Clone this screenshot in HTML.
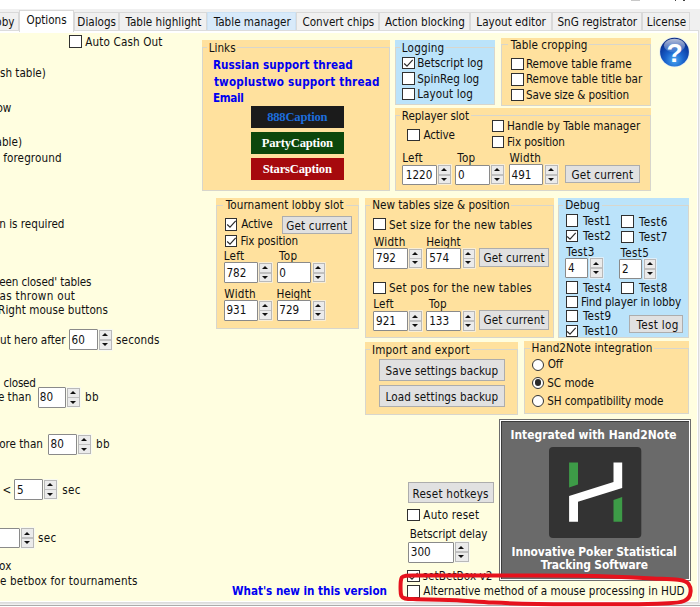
<!DOCTYPE html>
<html><head><meta charset="utf-8"><title>Options</title><style>
html,body{margin:0;padding:0}
body{width:700px;height:607px;overflow:hidden;position:relative;background:#fffee0;font-family:"DejaVu Sans Condensed","Liberation Sans",sans-serif;font-size:11.6px;color:#111}
div{box-sizing:border-box}
.abs{position:absolute}
#top{position:absolute;left:0;top:0;width:700px;height:31px;background:#f0f0f0;border-top:9.5px solid #fff}
#pan{position:absolute;left:-5px;top:29.6px;width:704.3px;height:573.4px;background:#fff;border:1px solid #dcdcdc}
#pan i{position:absolute;left:0;top:2.2px;right:1.2px;bottom:1.2px;background:#fffee0}
#rgt{position:absolute;left:699.3px;top:30px;width:2px;height:572.8px;background:#f0f0f0}
.tab{position:absolute;top:11.5px;height:18.5px;background:#f0f0f0;border:1px solid #d9d9d9;border-bottom:none;text-align:center;line-height:17px;white-space:nowrap;padding-top:1px;padding-left:1px}
.tab.hot{background:#d8eafa;border-color:#cbe1f4}
.tab.act{top:9.8px;height:22px;background:#fff;border-color:#d9d9d9;line-height:17px;padding-top:0.9px}
.t{position:absolute;white-space:pre;line-height:14px;height:14px}
.lnk{font-weight:bold;color:#0000f0}
.bw{font-weight:bold;color:#fff;font-size:11.9px}
.cb{position:absolute;background:#fff;border:1.2px solid #303030}
.cb svg{position:absolute;left:-1.2px;top:-1.2px}
.rd{position:absolute;width:12.2px;height:12.2px;border-radius:50%;background:#fff;border:1.1px solid #333}
.rd i{position:absolute;left:1.8px;top:1.8px;width:6.4px;height:6.4px;border-radius:50%;background:#2a2a2a}
.ed{position:absolute;background:#fff;border:1px solid #8a8a8a;border-radius:1px;padding-left:1.9px;white-space:pre;overflow:hidden}
.sp{position:absolute;background:#ebebeb;border:1px solid #b9b9b9;box-shadow:0 0 0 0.8px rgba(244,246,250,0.75)}
.sp b{position:absolute;left:0;right:0;top:50%;height:1.6px;background:#c0c0c0;margin-top:-0.8px}
.sp u,.sp s{position:absolute;left:50%;margin-left:-3.6px;width:0;height:0;border-left:3.6px solid transparent;border-right:3.6px solid transparent}
.sp u{top:13%;border-bottom:3.5px solid #111}
.sp s{bottom:16%;border-top:3.5px solid #111}
.bt{position:absolute;background:#e1e1e1;border:1px solid #adadad;text-align:center;white-space:pre}
.gb{position:absolute}
.fr{position:absolute;left:0;right:0;bottom:0;border:1px solid #d8d6cc}
.gl{z-index:1}
.cap{position:absolute;font-family:"Liberation Serif",serif;font-weight:bold;font-size:12.6px;letter-spacing:-0.2px;line-height:14px;height:14px;text-align:center;white-space:pre}
#ban{position:absolute;left:499.1px;top:418.9px;width:191.6px;height:161.8px;background:#fff;border:1px solid #6c6c6c;padding:1px}
#ban2{width:100%;height:100%;background:#6a6a6a;border-top:1px solid #3c3c3c;border-left:1px solid #3c3c3c}
#bot{position:absolute;left:0;top:602.8px;width:700px;height:5px;background:linear-gradient(#e3e3e3 0,#e3e3e3 1.2px,#f0f0f0 1.2px,#f0f0f0 2px,#ababab 2px,#ababab 3.2px,#fff 3.2px)}
</style></head><body>
<div id="top"></div>
<div id="bot"></div>
<div id="pan"><i></i></div><div id="rgt"></div>
<div class="abs" style="left:674.6px;top:0;width:1.8px;height:1.3px;background:#444"></div><div class="abs" style="left:683.2px;top:0;width:2.2px;height:1.3px;background:#444"></div><div class="abs" style="left:631px;top:0;width:9px;height:1.2px;background:#c8c8c8"></div>
<div class="tab" style="left:-20px;width:38.5px;text-align:right;padding-right:3px;box-sizing:border-box">bby</div>
<div class="tab act" style="left:18.5px;width:55.1px">Options</div>
<div class="tab" style="left:73.6px;width:45.2px">Dialogs</div>
<div class="tab" style="left:118.8px;width:88.4px">Table highlight</div>
<div class="tab hot" style="left:207.2px;width:89.2px">Table manager</div>
<div class="tab" style="left:296.4px;width:83.0px">Convert chips</div>
<div class="tab" style="left:379.4px;width:90.2px">Action blocking</div>
<div class="tab" style="left:469.6px;width:82.0px">Layout editor</div>
<div class="tab" style="left:551.6px;width:90.4px">SnG registrator</div>
<div class="tab" style="left:642.0px;width:48.0px">License</div>
<div class="cb" style="left:69.1px;top:35.4px;width:12.5px;height:12.3px"></div>
<div class="t " style="left:85.3px;top:35px;letter-spacing:0.13px;">Auto Cash Out</div>
<div class="t " style="right:654.2px;top:66.0px;">sh table)</div>
<div class="t " style="right:688.7px;top:101.0px;">ow</div>
<div class="t " style="right:678.0px;top:135.0px;">able)</div>
<div class="t " style="left:3.2px;top:151px;letter-spacing:0.11px;">foreground</div>
<div class="t " style="right:635.5px;top:217.0px;">on is required</div>
<div class="t " style="right:608.7px;top:275.0px;letter-spacing:-0.12px">een closed' tables</div>
<div class="t " style="right:624.8px;top:289.0px;letter-spacing:0.3px">was thrown out</div>
<div class="t " style="right:592.0px;top:303.0px;letter-spacing:0.05px">Right mouse buttons</div>
<div class="t " style="right:634.5px;top:333.0px;">ut hero after</div>
<div class="ed" style="left:69.2px;top:329.4px;width:28.5px;height:21.0px"></div>
<div class="t" style="left:71.6px;top:333px">60</div>
<div class="sp" style="left:99.2px;top:330.1px;width:13.0px;height:19.9px"><b></b><u></u><s></s></div>
<div class="t " style="left:116.0px;top:333px;letter-spacing:0.14px;">seconds</div>
<div class="t " style="left:3.6px;top:376px;letter-spacing:-0.24px;">closed</div>
<div class="t " style="right:668.7px;top:390.0px;">e than</div>
<div class="ed" style="left:37.5px;top:387.1px;width:28.4px;height:20.6px"></div>
<div class="t" style="left:39.8px;top:390px">80</div>
<div class="sp" style="left:67.4px;top:387.8px;width:13.0px;height:19.5px"><b></b><u></u><s></s></div>
<div class="t " style="left:85.1px;top:390px;letter-spacing:0.30px;">bb</div>
<div class="t " style="right:657.0px;top:437.0px;">ore than</div>
<div class="ed" style="left:48.3px;top:434.3px;width:28.3px;height:20.4px"></div>
<div class="t" style="left:50.6px;top:437px">80</div>
<div class="sp" style="left:78.1px;top:435.0px;width:13.0px;height:19.3px"><b></b><u></u><s></s></div>
<div class="t " style="left:96.1px;top:437px;letter-spacing:0.30px;">bb</div>
<div class="t " style="left:2.6px;top:483.0px;">&lt;</div>
<div class="ed" style="left:14.3px;top:479.2px;width:28.4px;height:20.6px"></div>
<div class="t" style="left:17.0px;top:483px">5</div>
<div class="sp" style="left:44.2px;top:479.9px;width:13.0px;height:19.5px"><b></b><u></u><s></s></div>
<div class="t " style="left:62.3px;top:483px;letter-spacing:0.30px;">sec</div>
<div class="ed" style="left:-10.0px;top:527.6px;width:29.8px;height:20.4px"></div>
<div class="sp" style="left:21.2px;top:528.3px;width:13.0px;height:19.3px"><b></b><u></u><s></s></div>
<div class="t " style="left:38.1px;top:531px;letter-spacing:0.30px;">sec</div>
<div class="t " style="right:688.7px;top:559.0px;">ox</div>
<div class="t " style="left:0.0px;top:574px;letter-spacing:0.17px;">e betbox for tournaments</div>
<div class="gb" style="left:201.9px;top:40.4px;width:188.4px;height:150.2px;background:#ffe19e"><div class="fr" style="top:7.1px"></div></div>
<div class="abs" style="left:206.8px;top:45.6px;width:30.4px;height:4px;background:#ffe19e"></div>
<div class="t " style="left:208.7px;top:41px;letter-spacing:0.02px;">Links</div>
<div class="t lnk" style="left:212.9px;top:58px;letter-spacing:0.08px;">Russian support thread</div>
<div class="t lnk" style="left:213.9px;top:75px;letter-spacing:0.21px;">twoplustwo support thread</div>
<div class="t lnk" style="left:212.9px;top:91px;letter-spacing:-0.30px;">Email</div>
<div class="abs" style="left:250.7px;top:106px;width:93.2px;height:22.2px;background:#1b1b1b"></div>
<div class="cap" style="left:250.7px;top:109.75px;width:93.2px;color:#1d6ddc">888Caption</div>
<div class="abs" style="left:250.7px;top:131.8px;width:93.2px;height:22.6px;background:#0c470c"></div>
<div class="cap" style="left:250.7px;top:135.75px;width:93.2px;color:#fff">PartyCaption</div>
<div class="abs" style="left:250.7px;top:157.6px;width:93.2px;height:22.6px;background:#a6090d"></div>
<div class="cap" style="left:250.7px;top:161.75px;width:93.2px;color:#fff">StarsCaption</div>
<div class="gb" style="left:395.0px;top:40.4px;width:100.4px;height:64.6px;background:#bbe3fa"><div class="fr" style="top:7.1px"></div></div>
<div class="abs" style="left:399.9px;top:45.6px;width:46.0px;height:4px;background:#bbe3fa"></div>
<div class="t " style="left:401.8px;top:41px;letter-spacing:0.18px;">Logging</div>
<div class="cb" style="left:402.3px;top:56.8px;width:12.5px;height:12.3px"><svg viewBox="0 0 12.5 12.3" width="12.5" height="12.3"><path d="M2.2 6.5 L5 9.1 L10.7 2.9" fill="none" stroke="#2a2a2a" stroke-width="1.15"/></svg></div>
<div class="t " style="left:417.2px;top:56px;letter-spacing:0.00px;">Betscript log</div>
<div class="cb" style="left:402.3px;top:72.4px;width:12.5px;height:12.3px"></div>
<div class="t " style="left:417.2px;top:72px;letter-spacing:0.03px;">SpinReg log</div>
<div class="cb" style="left:402.3px;top:87.6px;width:12.5px;height:12.3px"></div>
<div class="t " style="left:417.2px;top:87px;letter-spacing:0.10px;">Layout log</div>
<div class="gb" style="left:501.1px;top:37.7px;width:149.8px;height:68.3px;background:#ffe19e"><div class="fr" style="top:6.8px"></div></div>
<div class="abs" style="left:507.8px;top:42.6px;width:81.4px;height:4px;background:#ffe19e"></div>
<div class="t " style="left:510.7px;top:38px;letter-spacing:0.09px;">Table cropping</div>
<div class="cb" style="left:511.2px;top:57.8px;width:12.5px;height:12.3px"></div>
<div class="t " style="left:525.9px;top:57px;letter-spacing:-0.03px;">Remove table frame</div>
<div class="cb" style="left:511.2px;top:73.3px;width:12.5px;height:12.3px"></div>
<div class="t " style="left:525.9px;top:72px;letter-spacing:0.00px;">Remove table title bar</div>
<div class="cb" style="left:511.2px;top:88.6px;width:12.5px;height:12.3px"></div>
<div class="t " style="left:525.9px;top:88px;letter-spacing:-0.11px;">Save size &amp; position</div>
<svg class="abs" style="left:658px;top:36px" width="34" height="34" viewBox="0 0 34 34">
<defs><radialGradient id="hg" cx="50%" cy="78%" r="70%"><stop offset="0" stop-color="#4aa8f2"/><stop offset="0.45" stop-color="#1a63cc"/><stop offset="0.85" stop-color="#0b3aa0"/><stop offset="1" stop-color="#0a2d86"/></radialGradient>
<linearGradient id="hs" x1="0" y1="0" x2="0" y2="1"><stop offset="0" stop-color="#fff" stop-opacity="0.7"/><stop offset="1" stop-color="#fff" stop-opacity="0.1"/></linearGradient></defs>
<circle cx="16.5" cy="16.1" r="15.2" fill="#dfe9f3" opacity="0.8"/>
<circle cx="16.5" cy="16.1" r="14.4" fill="url(#hg)"/>
<ellipse cx="16.5" cy="9.6" rx="10.6" ry="6.8" fill="url(#hs)"/>
<text x="16.6" y="25.6" text-anchor="middle" font-family="'Liberation Sans',sans-serif" font-weight="bold" font-size="26.5" fill="#fff">?</text>
</svg>
<div class="gb" style="left:395.0px;top:108.0px;width:256.0px;height:83.0px;background:#ffe19e"><div class="fr" style="top:7.1px"></div></div>
<div class="abs" style="left:399.9px;top:113.2px;width:71.4px;height:4px;background:#ffe19e"></div>
<div class="t " style="left:401.8px;top:109px;letter-spacing:-0.07px;">Replayer slot</div>
<div class="cb" style="left:407.2px;top:129.1px;width:12.5px;height:12.3px"></div>
<div class="t " style="left:423.4px;top:128px;letter-spacing:-0.13px;">Active</div>
<div class="cb" style="left:491.9px;top:120.2px;width:12.5px;height:12.3px"></div>
<div class="t " style="left:507.0px;top:119px;letter-spacing:0.00px;">Handle by Table manager</div>
<div class="cb" style="left:491.9px;top:135.6px;width:12.5px;height:12.3px"></div>
<div class="t " style="left:507.0px;top:135px;letter-spacing:-0.08px;">Fix position</div>
<div class="t " style="left:402.2px;top:151px;letter-spacing:0.30px;">Left</div>
<div class="t " style="left:457.2px;top:151px;letter-spacing:0.30px;">Top</div>
<div class="t " style="left:509.5px;top:151px;letter-spacing:0.30px;">Width</div>
<div class="ed" style="left:402.4px;top:164.5px;width:34.4px;height:20.4px"></div>
<div class="t" style="left:405.8px;top:168px">1220</div>
<div class="sp" style="left:438.4px;top:165.2px;width:12.5px;height:19.3px"><b></b><u></u><s></s></div>
<div class="ed" style="left:455.2px;top:164.5px;width:34.4px;height:20.4px"></div>
<div class="t" style="left:458.1px;top:168px">0</div>
<div class="sp" style="left:491.2px;top:165.2px;width:12.6px;height:19.3px"><b></b><u></u><s></s></div>
<div class="ed" style="left:509.1px;top:164.4px;width:34.1px;height:20.5px"></div>
<div class="t" style="left:511.6px;top:168px">491</div>
<div class="sp" style="left:544.9px;top:165.1px;width:12.9px;height:19.4px"><b></b><u></u><s></s></div>
<div class="bt" style="left:564.9px;top:164.6px;width:74.7px;height:18.9px"></div>
<div class="t " style="left:571.6px;top:168px;letter-spacing:0.19px;">Get current</div>
<div class="gb" style="left:216.2px;top:197.9px;width:143.0px;height:131.6px;background:#ffe19e"><div class="fr" style="top:7.0px"></div></div>
<div class="abs" style="left:222.8px;top:203.0px;width:123.2px;height:4px;background:#ffe19e"></div>
<div class="t " style="left:225.7px;top:198px;letter-spacing:0.10px;">Tournament lobby slot</div>
<div class="cb" style="left:224.9px;top:218.4px;width:12.5px;height:12.3px"><svg viewBox="0 0 12.5 12.3" width="12.5" height="12.3"><path d="M2.2 6.5 L5 9.1 L10.7 2.9" fill="none" stroke="#2a2a2a" stroke-width="1.15"/></svg></div>
<div class="t " style="left:241.3px;top:217px;letter-spacing:-0.18px;">Active</div>
<div class="bt" style="left:282.3px;top:215.5px;width:70.0px;height:18.9px"></div>
<div class="t " style="left:286.3px;top:219px;letter-spacing:0.14px;">Get current</div>
<div class="cb" style="left:224.9px;top:234.8px;width:12.5px;height:12.3px"><svg viewBox="0 0 12.5 12.3" width="12.5" height="12.3"><path d="M2.2 6.5 L5 9.1 L10.7 2.9" fill="none" stroke="#2a2a2a" stroke-width="1.15"/></svg></div>
<div class="t " style="left:240.4px;top:234px;letter-spacing:-0.10px;">Fix position</div>
<div class="t " style="left:223.7px;top:249px;letter-spacing:0.30px;">Left</div>
<div class="t " style="left:279.0px;top:249px;letter-spacing:0.30px;">Top</div>
<div class="ed" style="left:223.9px;top:262.4px;width:33.9px;height:20.5px"></div>
<div class="t" style="left:226.4px;top:266px">782</div>
<div class="sp" style="left:259.4px;top:263.1px;width:12.8px;height:19.4px"><b></b><u></u><s></s></div>
<div class="ed" style="left:276.9px;top:262.4px;width:33.7px;height:20.5px"></div>
<div class="t" style="left:279.3px;top:266px">0</div>
<div class="sp" style="left:312.5px;top:263.1px;width:12.5px;height:19.4px"><b></b><u></u><s></s></div>
<div class="t " style="left:224.3px;top:287px;letter-spacing:0.28px;">Width</div>
<div class="t " style="left:276.6px;top:287px;letter-spacing:-0.05px;">Height</div>
<div class="ed" style="left:223.9px;top:299.8px;width:33.9px;height:20.8px"></div>
<div class="t" style="left:226.4px;top:303px">931</div>
<div class="sp" style="left:259.4px;top:300.5px;width:12.8px;height:19.7px"><b></b><u></u><s></s></div>
<div class="ed" style="left:276.9px;top:299.8px;width:33.7px;height:20.8px"></div>
<div class="t" style="left:279.3px;top:303px">729</div>
<div class="sp" style="left:312.5px;top:300.5px;width:12.5px;height:19.7px"><b></b><u></u><s></s></div>
<div class="gb" style="left:365.2px;top:197.6px;width:188.9px;height:140.5px;background:#ffe19e"><div class="fr" style="top:7.0px"></div></div>
<div class="abs" style="left:370.4px;top:202.7px;width:140.7px;height:4px;background:#ffe19e"></div>
<div class="t " style="left:372.2px;top:198px;letter-spacing:0.00px;">New tables size &amp; position</div>
<div class="cb" style="left:373.4px;top:218.2px;width:12.5px;height:12.3px"></div>
<div class="t " style="left:389.0px;top:218px;letter-spacing:0.17px;">Set size for the new tables</div>
<div class="t " style="left:373.9px;top:235px;letter-spacing:0.30px;">Width</div>
<div class="t " style="left:426.2px;top:235px;letter-spacing:0.00px;">Height</div>
<div class="ed" style="left:373.4px;top:248.0px;width:34.4px;height:20.5px"></div>
<div class="t" style="left:376.1px;top:251px">792</div>
<div class="sp" style="left:409.4px;top:248.7px;width:12.5px;height:19.4px"><b></b><u></u><s></s></div>
<div class="ed" style="left:426.2px;top:248.0px;width:34.4px;height:20.5px"></div>
<div class="t" style="left:429.2px;top:251px">574</div>
<div class="sp" style="left:462.5px;top:248.7px;width:12.5px;height:19.4px"><b></b><u></u><s></s></div>
<div class="bt" style="left:479.0px;top:248.2px;width:69.8px;height:19.3px"></div>
<div class="t " style="left:483.4px;top:251px;letter-spacing:0.17px;">Get current</div>
<div class="cb" style="left:373.4px;top:281.6px;width:12.5px;height:12.3px"></div>
<div class="t " style="left:389.0px;top:281px;letter-spacing:0.23px;">Set pos for the new tables</div>
<div class="t " style="left:373.2px;top:297px;letter-spacing:0.30px;">Left</div>
<div class="t " style="left:428.7px;top:297px;letter-spacing:0.30px;">Top</div>
<div class="ed" style="left:373.4px;top:310.7px;width:34.4px;height:20.4px"></div>
<div class="t" style="left:376.1px;top:314px">921</div>
<div class="sp" style="left:409.4px;top:311.4px;width:12.5px;height:19.3px"><b></b><u></u><s></s></div>
<div class="ed" style="left:426.2px;top:310.7px;width:34.4px;height:20.4px"></div>
<div class="t" style="left:429.2px;top:314px">133</div>
<div class="sp" style="left:462.5px;top:311.4px;width:12.5px;height:19.3px"><b></b><u></u><s></s></div>
<div class="bt" style="left:479.0px;top:310.3px;width:69.8px;height:19.4px"></div>
<div class="t " style="left:483.4px;top:313px;letter-spacing:0.17px;">Get current</div>
<div class="gb" style="left:558.3px;top:197.8px;width:131.0px;height:140.6px;background:#bbe3fa"><div class="fr" style="top:7.1px"></div></div>
<div class="abs" style="left:563.4px;top:203.0px;width:38.2px;height:4px;background:#bbe3fa"></div>
<div class="t " style="left:565.2px;top:198px;letter-spacing:0.07px;">Debug</div>
<div class="cb" style="left:565.5px;top:214.4px;width:12.5px;height:12.3px"></div>
<div class="t " style="left:582.9px;top:214px;letter-spacing:0.27px;">Test1</div>
<div class="cb" style="left:621.2px;top:215.4px;width:12.5px;height:12.3px"></div>
<div class="t " style="left:639.1px;top:215px;letter-spacing:0.30px;">Test6</div>
<div class="cb" style="left:565.5px;top:229.9px;width:12.5px;height:12.3px"><svg viewBox="0 0 12.5 12.3" width="12.5" height="12.3"><path d="M2.2 6.5 L5 9.1 L10.7 2.9" fill="none" stroke="#2a2a2a" stroke-width="1.15"/></svg></div>
<div class="t " style="left:582.9px;top:229px;letter-spacing:0.27px;">Test2</div>
<div class="cb" style="left:621.2px;top:230.8px;width:12.5px;height:12.3px"></div>
<div class="t " style="left:639.1px;top:230px;letter-spacing:0.30px;">Test7</div>
<div class="t " style="left:566.2px;top:245px;letter-spacing:0.30px;">Test3</div>
<div class="t " style="left:620.6px;top:246px;letter-spacing:0.30px;">Test5</div>
<div class="ed" style="left:565.2px;top:257.6px;width:23.3px;height:20.4px"></div>
<div class="t" style="left:567.9px;top:261px">4</div>
<div class="sp" style="left:590.1px;top:258.3px;width:12.6px;height:19.3px"><b></b><u></u><s></s></div>
<div class="ed" style="left:619.3px;top:258.5px;width:23.0px;height:20.8px"></div>
<div class="t" style="left:622.1px;top:262px">2</div>
<div class="sp" style="left:644.2px;top:259.2px;width:12.2px;height:19.7px"><b></b><u></u><s></s></div>
<div class="cb" style="left:565.5px;top:281.4px;width:12.5px;height:12.3px"></div>
<div class="t " style="left:582.9px;top:281px;letter-spacing:0.30px;">Test4</div>
<div class="cb" style="left:621.2px;top:281.8px;width:12.5px;height:12.3px"></div>
<div class="t " style="left:639.1px;top:281px;letter-spacing:0.30px;">Test8</div>
<div class="cb" style="left:565.5px;top:295.9px;width:12.5px;height:12.3px"></div>
<div class="t " style="left:581.0px;top:295px;letter-spacing:-0.11px;">Find player in lobby</div>
<div class="cb" style="left:565.5px;top:310.1px;width:12.5px;height:12.3px"></div>
<div class="t " style="left:582.9px;top:309px;letter-spacing:0.30px;">Test9</div>
<div class="cb" style="left:565.5px;top:324.8px;width:12.5px;height:12.3px"><svg viewBox="0 0 12.5 12.3" width="12.5" height="12.3"><path d="M2.2 6.5 L5 9.1 L10.7 2.9" fill="none" stroke="#2a2a2a" stroke-width="1.15"/></svg></div>
<div class="t " style="left:582.9px;top:324px;letter-spacing:0.30px;">Test10</div>
<div class="bt" style="left:629.3px;top:315.4px;width:54.1px;height:17.3px"></div>
<div class="t " style="left:636.6px;top:318px;letter-spacing:0.31px;">Test log</div>
<div class="gb" style="left:365.3px;top:341.5px;width:153.0px;height:73.5px;background:#ffe19e"><div class="fr" style="top:7.4px"></div></div>
<div class="abs" style="left:370.1px;top:347.0px;width:101.8px;height:4px;background:#ffe19e"></div>
<div class="t " style="left:371.9px;top:343px;letter-spacing:0.19px;">Import and export</div>
<div class="bt" style="left:378.5px;top:359.3px;width:126.1px;height:21.4px"></div>
<div class="t " style="left:385.6px;top:364px;letter-spacing:0.05px;">Save settings backup</div>
<div class="bt" style="left:378.5px;top:385.2px;width:126.1px;height:21.4px"></div>
<div class="t " style="left:385.6px;top:390px;letter-spacing:0.08px;">Load settings backup</div>
<div class="gb" style="left:524.2px;top:341.0px;width:165.2px;height:73.0px;background:#ffe19e"><div class="fr" style="top:7.0px"></div></div>
<div class="abs" style="left:529.8px;top:346.1px;width:124.3px;height:4px;background:#ffe19e"></div>
<div class="t " style="left:531.6px;top:341px;letter-spacing:0.07px;">Hand2Note integration</div>
<div class="rd" style="left:532.0px;top:358.6px"></div>
<div class="t " style="left:547.7px;top:357px;letter-spacing:-0.13px;">Off</div>
<div class="rd" style="left:532.0px;top:376.6px"><i></i></div>
<div class="t " style="left:547.2px;top:376px;letter-spacing:0.00px;">SC mode</div>
<div class="rd" style="left:532.0px;top:394.8px"></div>
<div class="t " style="left:547.2px;top:394px;letter-spacing:-0.11px;">SH compatibility mode</div>
<div id="ban"><div id="ban2"></div></div>
<div class="t bw" style="left:510.4px;top:428px;letter-spacing:0.03px;">Integrated with Hand2Note</div>
<svg class="abs" style="left:549px;top:446.6px" width="93" height="92" viewBox="549 446.6 93 92">
<rect x="549" y="446.6" width="92.3" height="91.1" rx="4" fill="#333"/>
<polygon points="569.1,462 578,462 578,484.1 569.1,487" fill="#3d9b47"/>
<polygon points="613.5,462 622.2,462 622.2,487.6 578,501.4 578,521.3 569.1,521.3 569.1,495.7 613.5,481.5" fill="#fff"/>
<polygon points="613.5,499.7 622.2,496.6 622.2,521.3 613.5,521.3" fill="#3d9b47"/>
</svg>
<div class="t bw" style="left:511.5px;top:545px;letter-spacing:-0.06px;">Innovative Poker Statistical</div>
<div class="t bw" style="left:540.8px;top:558px;letter-spacing:-0.12px;">Tracking Software</div>
<div class="bt" style="left:408.1px;top:482.4px;width:85.5px;height:21.0px"></div>
<div class="t " style="left:412.5px;top:487px;letter-spacing:0.24px;">Reset hotkeys</div>
<div class="cb" style="left:407.4px;top:508.6px;width:12.5px;height:12.3px"></div>
<div class="t " style="left:423.3px;top:508px;letter-spacing:0.20px;">Auto reset</div>
<div class="t " style="left:409.7px;top:527px;letter-spacing:-0.06px;">Betscript delay</div>
<div class="ed" style="left:408.1px;top:541.7px;width:45.9px;height:20.9px"></div>
<div class="t" style="left:410.8px;top:545px">300</div>
<div class="sp" style="left:455.4px;top:542.4px;width:13.2px;height:19.8px"><b></b><u></u><s></s></div>
<div class="cb" style="left:407.4px;top:569.7px;width:12.5px;height:12.3px"><svg viewBox="0 0 12.5 12.3" width="12.5" height="12.3"><path d="M2.2 6.5 L5 9.1 L10.7 2.9" fill="none" stroke="#2a2a2a" stroke-width="1.15"/></svg></div>
<div class="t " style="left:422.6px;top:569px;letter-spacing:0.07px;">setBetBox v2</div>
<div class="cb" style="left:407.4px;top:585.3px;width:12.5px;height:12.3px"></div>
<div class="t " style="left:423.3px;top:584px;letter-spacing:0.00px;">Alternative method of a mouse processing in HUD</div>
<div class="t lnk" style="left:232.1px;top:584px;letter-spacing:-0.03px;">What's new in this version</div>
<svg class="abs" style="left:390px;top:565px" width="310" height="42" viewBox="390 565 310 42">
<path d="M 400.6 590 C 400.4 584, 400.4 580, 401.8 577.4 C 403.4 575.3, 408 575.4, 414 575.4 C 440 575.3, 470 575.5, 500 575.6 C 540 575.5, 570 575.5, 595 575.9 C 610 576.4, 635 577.7, 653 578.5 C 664 579, 672 579.2, 678 579.8 C 684 580.4, 687 581.6, 688.6 584 C 690.3 586.5, 690.8 589, 690.6 591.5 C 690.3 596, 688 599.5, 684 601 C 679 602.8, 674 603, 668 603.2 C 655 603.8, 645 604.2, 630 604.2 C 610 604.3, 590 604.3, 570 604.3 C 540 604.2, 515 603.6, 493 602.6 C 480 602, 468 600.8, 457 600.2 C 440 599.5, 425 599.3, 413 599.1 C 406 599, 402.5 598.5, 401.4 596 C 400.7 594, 400.6 592, 400.6 590 Z" fill="none" stroke="#e6121d" stroke-width="4" stroke-linejoin="round"/>
</svg>
</body></html>
